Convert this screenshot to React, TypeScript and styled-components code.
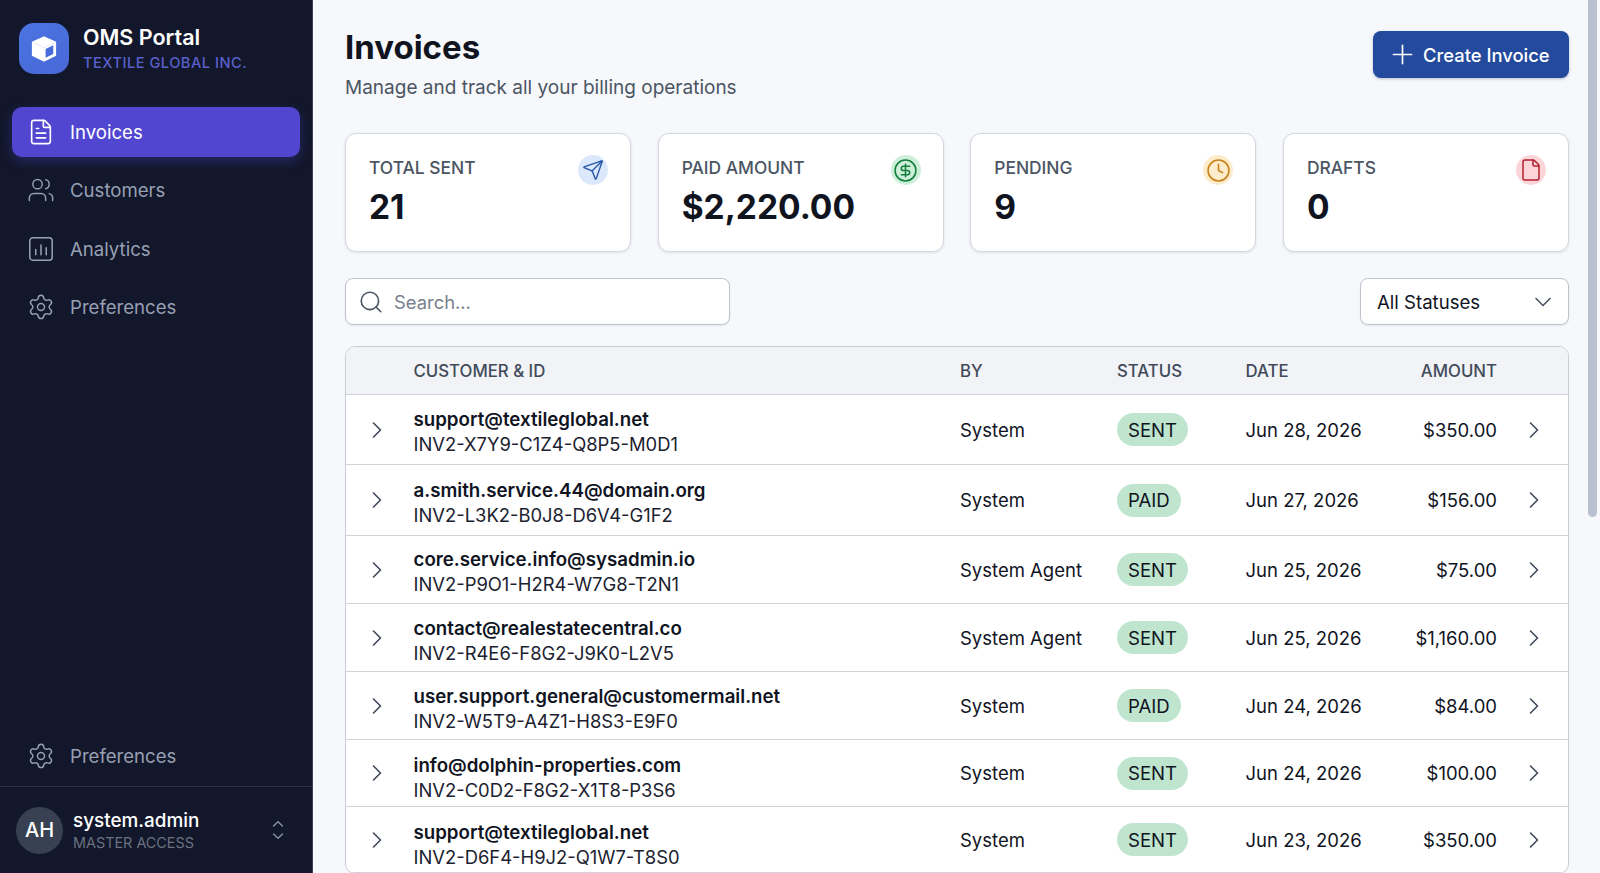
import React from 'react';
import styled, { createGlobalStyle } from 'styled-components';
import { FileText, Users, Settings, Send, CircleDollarSign, Clock, File, Search, Plus, ChevronDown, ChevronRight } from 'lucide-react';

const Global = createGlobalStyle`
  html, body { margin: 0; padding: 0; height: 100%; overflow: hidden; }
  body { font-family: Inter, "Liberation Sans", sans-serif; color: #10141f; background: #f6f8fb; }
  * { box-sizing: border-box; }
`;

const Shell = styled.div`
  display: flex;
  height: 873px;
  width: 1600px;
`;

const Sidebar = styled.aside`
  width: 313px;
  flex: none;
  height: 100%;
  display: flex;
  flex-direction: column;
  background: #12172b;
  border-right: 1px solid #3a4152;
`;

const Brand = styled.div`
  display: flex;
  align-items: center;
  gap: 14px;
  padding: 23px 0 32.5px 19px;
`;

const LogoBadge = styled.div`
  width: 50px;
  height: 51px;
  border-radius: 15px;
  background: linear-gradient(145deg, #4a74e0, #4a68d8);
  display: flex;
  align-items: center;
  justify-content: center;
  flex: none;
`;

const BrandText = styled.div`
  display: flex;
  flex-direction: column;
  gap: 4px;
  margin-top: -2px;
`;

const BrandName = styled.div`
  color: #fff;
  font-size: 21.5px;
  line-height: 26px;
  font-weight: 600;
`;

const BrandSub = styled.div`
  color: #5a60cb;
  font-size: 14.6px;
  line-height: 18px;
  font-weight: 500;
  letter-spacing: 0.5px;
`;

const Nav = styled.nav`
  display: flex;
  flex-direction: column;
  gap: 8.5px;
  padding: 0 12px;
`;

const NavItem = styled.div<{ $active?: boolean }>`
  height: 50px;
  width: 288px;
  flex: none;
  display: flex;
  align-items: center;
  gap: 15px;
  padding-left: 15px;
  border-radius: 10px;
  font-size: 18.6px;
  color: ${p => (p.$active ? '#ffffff' : '#98a0b3')};
  background: ${p => (p.$active ? '#5046cf' : 'transparent')};
  box-shadow: ${p => (p.$active ? '0 4px 12px rgba(80,70,207,0.35)' : 'none')};
  & > svg { flex: none; color: ${p => (p.$active ? '#ffffff' : '#98a0b3')}; }
`;

const SideBottom = styled.div`
  margin-top: auto;
  display: flex;
  flex-direction: column;
`;

const BottomNav = styled.div`
  padding: 0 12px 5px;
`;

const UserRow = styled.div`
  display: flex;
  align-items: center;
  height: 87px;
  padding: 0 27px 0 16px;
  border-top: 1px solid #2b3143;
`;

const Avatar = styled.div`
  width: 47px;
  height: 47px;
  border-radius: 50%;
  background: #374151;
  color: #fff;
  font-size: 20px;
  font-weight: 500;
  display: flex;
  align-items: center;
  justify-content: center;
  flex: none;
`;

const UserText = styled.div`
  margin: 1px 0 0 10px;
  display: flex;
  flex-direction: column;
  gap: 1px;
  flex: 1;
`;

const UserName = styled.div`
  color: #fff;
  font-size: 18.9px;
  line-height: 24px;
  font-weight: 500;
`;

const UserRole = styled.div`
  color: #6b7280;
  font-size: 14.4px;
  line-height: 18px;
`;

const Main = styled.main`
  position: relative;
  flex: 1;
  height: 100%;
  overflow: hidden;
  padding: 0 31px 0 32px;
  background: #f6f8fb;
`;

const ScrollThumb = styled.div`
  position: absolute;
  top: 0;
  right: 3px;
  width: 9px;
  height: 517px;
  border-radius: 0 0 5px 5px;
  background: #b9c1d0;
`;

const Header = styled.header`
  display: flex;
  justify-content: space-between;
  align-items: flex-start;
  height: 133px;
  padding-top: 24px;
`;

const TitleBlock = styled.div`
  display: flex;
  flex-direction: column;
  gap: 5px;
`;

const Title = styled.h1`
  margin: 0;
  font-size: 33px;
  line-height: 46px;
  font-weight: 700;
  color: #10141f;
`;

const Subtitle = styled.p`
  margin: 0;
  font-size: 19px;
  line-height: 26px;
  color: #4b5563;
`;

const CreateButton = styled.button`
  margin-top: 7px;
  height: 47px;
  width: 196px;
  display: flex;
  align-items: center;
  gap: 5px;
  padding: 0 0 0 14px;
  border: none;
  border-radius: 8px;
  background: #234a9c;
  color: #fff;
  font-family: inherit;
  font-size: 18.4px;
  font-weight: 500;
  box-shadow: 0 1px 3px rgba(30,50,110,0.3);
`;

const Stats = styled.section`
  display: grid;
  grid-template-columns: repeat(4, 1fr);
  gap: 26.5px;
`;

const Card = styled.div`
  height: 119px;
  background: #fff;
  border: 1px solid #d4d7de;
  border-radius: 11px;
  box-shadow: 0 1px 3px rgba(30,40,60,0.1);
  padding: 22px 22px 22px 23px;
  display: flex;
  justify-content: space-between;
  align-items: flex-start;
`;

const CardText = styled.div`
  display: flex;
  flex-direction: column;
  gap: 5px;
`;

const CardLabel = styled.div`
  font-size: 17.4px;
  line-height: 24px;
  font-weight: 500;
  color: #4b5563;
`;

const CardValue = styled.div`
  font-size: 33.5px;
  line-height: 44px;
  font-weight: 700;
  color: #10141f;
`;

const IconCircle = styled.div<{ $bg: string; $fg: string }>`
  width: 30px;
  height: 30px;
  margin-top: -1px;
  border-radius: 50%;
  background: ${p => p.$bg};
  color: ${p => p.$fg};
  display: flex;
  align-items: center;
  justify-content: center;
`;

const Toolbar = styled.div`
  display: flex;
  justify-content: space-between;
  margin-top: 26px;
`;

const SearchBox = styled.div`
  width: 385px;
  height: 47px;
  display: flex;
  align-items: center;
  gap: 10px;
  padding-left: 12px;
  background: #fff;
  border: 1px solid #bfc3cc;
  border-radius: 8px;
  color: #4b5563;
  box-shadow: 0 1px 2px rgba(30,40,60,0.08);
`;

const Placeholder = styled.span`
  font-size: 18.4px;
  color: #7a818e;
`;

const SelectBox = styled.div`
  width: 209px;
  height: 47px;
  display: flex;
  align-items: center;
  justify-content: space-between;
  padding: 0 11px 0 16px;
  background: #fff;
  border: 1px solid #bfc3cc;
  border-radius: 8px;
  font-size: 18.6px;
  color: #10141f;
  box-shadow: 0 1px 2px rgba(30,40,60,0.08);
  & > svg { color: #4b5563; }
`;

const Table = styled.section`
  margin-top: 21px;
  border: 1px solid #c9cdd6;
  border-radius: 10px;
  overflow: hidden;
  background: #fff;
`;

const columns = '67.5px 546.5px 157px 128.5px 140.5px 111px 71px';

const HeadRow = styled.div`
  display: grid;
  grid-template-columns: ${columns};
  align-items: center;
  height: 48px;
  background: #f1f3f7;
  border-bottom: 1px solid #cdd1d9;
  font-size: 16.8px;
  font-weight: 500;
  color: #414a5a;
`;

const Row = styled.div<{ $h: number }>`
  display: grid;
  grid-template-columns: ${columns};
  align-items: center;
  height: ${p => p.$h}px;
  border-bottom: 1px solid #cfd2d9;
  font-size: 18.5px;
  color: #10141f;
`;

const Right = styled.div`
  text-align: right;
`;

const ExpandCell = styled.div`
  padding-left: 17px;
  display: flex;
  color: #414a5a;
`;

const ActionCell = styled.div`
  padding-left: 23px;
  display: flex;
  color: #414a5a;
`;

const CustomerCell = styled.div<{ $top: number }>`
  display: flex;
  flex-direction: column;
  padding-top: ${p => p.$top}px;
`;

const Email = styled.div`
  font-size: 18.7px;
  line-height: 24px;
  font-weight: 600;
  color: #10141f;
`;

const InvoiceId = styled.div`
  font-size: 18.4px;
  line-height: 24px;
  color: #1c2230;
`;

const Badge = styled.span`
  display: inline-flex;
  align-items: center;
  height: 33px;
  padding: 0 11px;
  border-radius: 17px;
  background: #bfe5cf;
  font-size: 18.6px;
  font-weight: 400;
  color: #10141f;
`;

const CubeIcon = () => (
  <svg width="28" height="28" viewBox="0 0 26 26">
    <path d="M13 2 23.5 6.8v12L13 24 2.5 18.8v-12z" fill="#fff" stroke="#fff" strokeWidth="1.5" strokeLinejoin="round" />
    <path d="M3 7 13 11.8 23 7" fill="none" stroke="#dfe5f7" strokeWidth="0.8" />
    <path d="M14.5 13 21.6 9.6v8L14.5 21.2z" fill="#4a6cdb" />
  </svg>
);

const ChartSquareIcon = () => (
  <svg width="28" height="28" viewBox="0 0 24 24" fill="none" stroke="currentColor" strokeWidth="1.3" strokeLinecap="round">
    <rect x="2.4" y="2.4" width="19.2" height="19.2" rx="2.6" />
    <path d="M7.5 12.5v4.5M12 8.5v8.5M16.5 11v6" />
  </svg>
);

const UpDownIcon = () => (
  <svg width="14" height="22" viewBox="0 0 14 22" fill="none" stroke="#8b93a5" strokeWidth="1.4" strokeLinecap="round" strokeLinejoin="round">
    <path d="M2.5 7 7 2.8 11.5 7M2.5 15 7 19.2 11.5 15" />
  </svg>
);

const stats = [
  { label: 'TOTAL SENT', value: '21', bg: '#dbe7fb', fg: '#2456a8', Icon: Send, size: 22 },
  { label: 'PAID AMOUNT', value: '$2,220.00', bg: '#cdeed8', fg: '#15803d', Icon: CircleDollarSign, size: 25 },
  { label: 'PENDING', value: '9', bg: '#fdeccb', fg: '#c9821a', Icon: Clock, size: 25 },
  { label: 'DRAFTS', value: '0', bg: '#fbd5d8', fg: '#b3202f', Icon: File, size: 24 },
];

const rows = [
  { email: 'support@textileglobal.net', id: 'INV2-X7Y9-C1Z4-Q8P5-M0D1', by: 'System', status: 'SENT', date: 'Jun 28, 2026', amount: '$350.00', h: 70, top: 4 },
  { email: 'a.smith.service.44@domain.org', id: 'INV2-L3K2-B0J8-D6V4-G1F2', by: 'System', status: 'PAID', date: 'Jun 27, 2026', amount: '$156.00', h: 71, top: 5 },
  { email: 'core.service.info@sysadmin.io', id: 'INV2-P9O1-H2R4-W7G8-T2N1', by: 'System Agent', status: 'SENT', date: 'Jun 25, 2026', amount: '$75.00', h: 68, top: 5 },
  { email: 'contact@realestatecentral.co', id: 'INV2-R4E6-F8G2-J9K0-L2V5', by: 'System Agent', status: 'SENT', date: 'Jun 25, 2026', amount: '$1,160.00', h: 68, top: 6 },
  { email: 'user.support.general@customermail.net', id: 'INV2-W5T9-A4Z1-H8S3-E9F0', by: 'System', status: 'PAID', date: 'Jun 24, 2026', amount: '$84.00', h: 68, top: 6 },
  { email: 'info@dolphin-properties.com', id: 'INV2-C0D2-F8G2-X1T8-P3S6', by: 'System', status: 'SENT', date: 'Jun 24, 2026', amount: '$100.00', h: 67, top: 10 },
  { email: 'support@textileglobal.net', id: 'INV2-D6F4-H9J2-Q1W7-T8S0', by: 'System', status: 'SENT', date: 'Jun 23, 2026', amount: '$350.00', h: 66, top: 10 },
];

export default function App() {
  return (
    <Shell>
      <Global />
      <Sidebar>
        <Brand>
          <LogoBadge><CubeIcon /></LogoBadge>
          <BrandText>
            <BrandName>OMS Portal</BrandName>
            <BrandSub>TEXTILE GLOBAL INC.</BrandSub>
          </BrandText>
        </Brand>
        <Nav>
          <NavItem $active><FileText size={28} strokeWidth={1.4} />Invoices</NavItem>
          <NavItem><Users size={28} strokeWidth={1.25} />Customers</NavItem>
          <NavItem><ChartSquareIcon />Analytics</NavItem>
          <NavItem><Settings size={28} strokeWidth={1.25} />Preferences</NavItem>
        </Nav>
        <SideBottom>
          <BottomNav>
            <NavItem><Settings size={28} strokeWidth={1.25} />Preferences</NavItem>
          </BottomNav>
          <UserRow>
            <Avatar>AH</Avatar>
            <UserText>
              <UserName>system.admin</UserName>
              <UserRole>MASTER ACCESS</UserRole>
            </UserText>
            <UpDownIcon />
          </UserRow>
        </SideBottom>
      </Sidebar>
      <Main>
        <ScrollThumb />
        <Header>
          <TitleBlock>
            <Title>Invoices</Title>
            <Subtitle>Manage and track all your billing operations</Subtitle>
          </TitleBlock>
          <CreateButton><Plus size={31} strokeWidth={1.3} />Create Invoice</CreateButton>
        </Header>
        <Stats>
          {stats.map(s => (
            <Card key={s.label}>
              <CardText>
                <CardLabel>{s.label}</CardLabel>
                <CardValue>{s.value}</CardValue>
              </CardText>
              <IconCircle $bg={s.bg} $fg={s.fg}><s.Icon size={s.size} strokeWidth={1.5} /></IconCircle>
            </Card>
          ))}
        </Stats>
        <Toolbar>
          <SearchBox><Search size={26} strokeWidth={1.5} /><Placeholder>Search...</Placeholder></SearchBox>
          <SelectBox>All Statuses<ChevronDown size={28} strokeWidth={1.4} /></SelectBox>
        </Toolbar>
        <Table>
          <HeadRow>
            <span />
            <span>CUSTOMER &amp; ID</span>
            <span>BY</span>
            <span>STATUS</span>
            <span>DATE</span>
            <Right>AMOUNT</Right>
            <span />
          </HeadRow>
          {rows.map(r => (
            <Row key={r.id} $h={r.h}>
              <ExpandCell><ChevronRight size={28} strokeWidth={1.4} /></ExpandCell>
              <CustomerCell $top={r.top}>
                <Email>{r.email}</Email>
                <InvoiceId>{r.id}</InvoiceId>
              </CustomerCell>
              <span>{r.by}</span>
              <span><Badge>{r.status}</Badge></span>
              <span>{r.date}</span>
              <Right>{r.amount}</Right>
              <ActionCell><ChevronRight size={28} strokeWidth={1.4} /></ActionCell>
            </Row>
          ))}
        </Table>
      </Main>
    </Shell>
  );
}
